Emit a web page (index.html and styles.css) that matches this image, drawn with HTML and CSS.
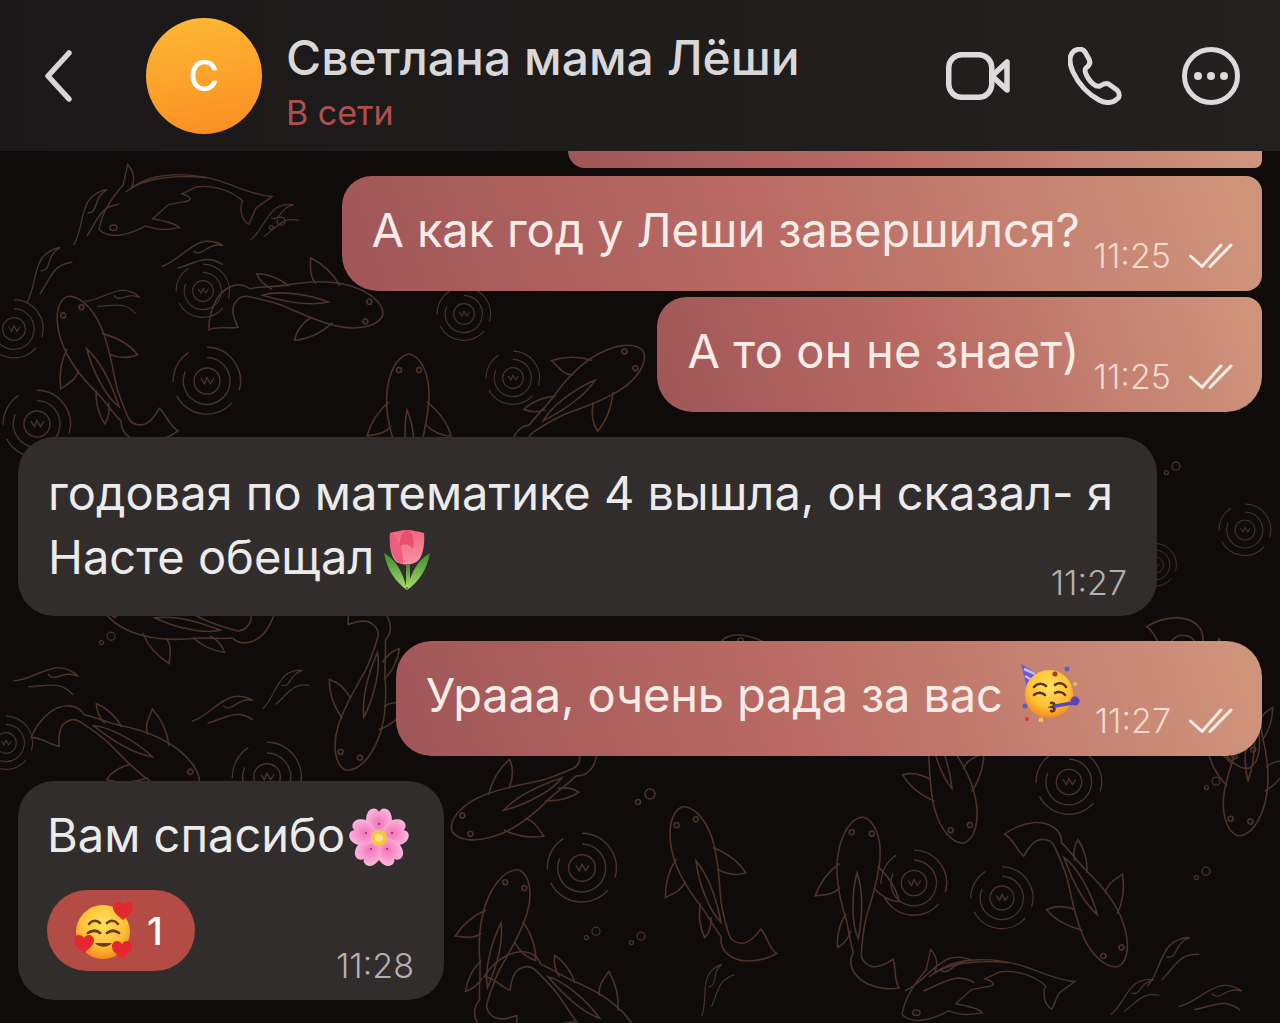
FILE: index.html
```html
<!DOCTYPE html>
<html lang="ru">
<head>
    <meta charset="UTF-8">
    <title>Светлана мама Лёши</title>
    <link rel="stylesheet" href="styles.css">
</head>
<body>

<!-- shared drawings -->
<svg class="defs" width="0" height="0">
    <defs>
        <symbol id="fish" viewBox="0 0 190 110" overflow="visible">
            <path d="M2 78C5 58 20 38 29 28L34 5C42 14 42 24 38 32C62 12 110 12 150 28C170 36 182 40 196 41L178 54L170 72C160 66 160 52 163 46C150 34 130 28 112 30L95 38C108 42 106 46 96 47L80 50L62 66C74 68 88 72 92 76C80 78 70 80 54 74C36 84 14 90 2 78Z"/>
            <path d="M32 36C50 20 88 16 122 20"/>
            <ellipse cx="18" cy="76" rx="4" ry="3"/>
        </symbol>
        <symbol id="koi" viewBox="0 0 100 170" overflow="visible">
            <path d="M42 2C30 4 22 20 20 40C18 60 24 84 32 104C36 116 38 128 42 138"/>
            <path d="M42 2C54 4 62 22 62 42C62 64 56 84 52 104C50 118 50 128 50 138"/>
            <path d="M42 138C36 150 44 162 58 168C70 172 82 172 90 170C84 162 86 150 82 142C74 148 66 152 60 150C54 148 50 144 50 138"/>
            <path d="M22 50C12 58 4 70 0 84C10 82 18 82 24 74"/>
            <path d="M60 50C70 58 80 68 84 84C74 84 66 80 58 72"/>
            <path d="M32 100C26 110 24 124 26 134C32 130 36 124 38 116"/>
            <path d="M40 58C36 80 38 110 46 124C48 104 48 76 40 58Z"/>
            <circle cx="32" cy="18" r="2.500"/>
            <circle cx="52" cy="18" r="2.500"/>
        </symbol>
        <symbol id="ripple" viewBox="0 0 90 90" overflow="visible">
            <path d="M45 18A27 27 0 1 1 20 34"/>
            <path d="M45 6A39 39 0 0 1 82 56"/>
            <path d="M74 70A39 39 0 0 1 10 62"/>
            <path d="M6 46A39 39 0 0 1 24 12"/>
            <circle cx="45" cy="45" r="15"/>
            <path d="M38 42L42 48L45 41L49 48L53 42"/>
        </symbol>
        <symbol id="swirl" viewBox="0 0 80 40" overflow="visible">
            <path d="M2 36C20 30 30 14 48 8C56 6 66 8 72 12C62 10 56 14 50 18C44 22 40 20 38 18"/>
            <path d="M20 38C34 34 44 28 54 28C60 28 66 30 72 34"/>
        </symbol>
        <symbol id="dots" viewBox="0 0 30 30" overflow="visible">
            <circle cx="8" cy="22" r="2.500"/>
            <circle cx="20" cy="14" r="5"/>
        </symbol>

        <radialGradient id="faceGrad" cx="50%" cy="35%" r="65%">
            <stop offset="0" stop-color="#ffe25a"/>
            <stop offset="0.65" stop-color="#fdbf35"/>
            <stop offset="1" stop-color="#f58a1f"/>
        </radialGradient>
        <linearGradient id="tulipGrad" x1="0" y1="0" x2="0" y2="1">
            <stop offset="0" stop-color="#f2667f"/>
            <stop offset="1" stop-color="#f894a4"/>
        </linearGradient>
        <linearGradient id="leafGrad" x1="0" y1="0" x2="0" y2="1">
            <stop offset="0" stop-color="#3d8a2c"/>
            <stop offset="1" stop-color="#a9dd6c"/>
        </linearGradient>
        <radialGradient id="petalGrad" cx="50%" cy="50%" r="55%">
            <stop offset="0" stop-color="#f472b8"/>
            <stop offset="1" stop-color="#fab6de"/>
        </radialGradient>
        <symbol id="heart" viewBox="0 0 20 18">
            <path d="M10 18C4 13 0 10 0 5.500C0 2 2.500 0 5 0C7 0 9 1 10 3C11 1 13 0 15 0C17.500 0 20 2 20 5.500C20 10 16 13 10 18Z" fill="#e5282f"/>
        </symbol>
        <symbol id="checks" viewBox="0 0 44 26">
            <path d="M1.500 13L13 23.500L32 2M21 23.500L42 2" fill="none" stroke="currentColor" stroke-width="3" stroke-linecap="round" stroke-linejoin="round"/>
        </symbol>
    </defs>
</svg>

<!-- wallpaper -->
<svg class="wallpaper" width="1280" height="1023" viewBox="0 0 1280 1023">
    <g class="line">
        <use href="#fish" width="170" height="98" transform="translate(97 160)"/>
        <use href="#fish" width="170" height="98" transform="translate(900 945)"/>

        <use href="#koi" width="100" height="170" transform="translate(65 295) rotate(-24) translate(-42 0)"/>
        <use href="#koi" width="100" height="170" transform="translate(385 315) rotate(101) translate(-42 0)"/>
        <use href="#koi" width="100" height="170" transform="translate(409 352) translate(-42 0)"/>
        <use href="#koi" width="100" height="170" transform="translate(645 350) rotate(57) translate(-42 0)"/>
        <use href="#koi" width="100" height="170" transform="translate(100 600) rotate(-74) translate(-42 0)"/>
        <use href="#koi" width="100" height="170" transform="translate(200 790) rotate(123) translate(-42 0)"/>
        <use href="#koi" width="100" height="170" transform="translate(345 772) rotate(-163) translate(-42 0)"/>
        <use href="#koi" width="100" height="170" transform="translate(681 805) rotate(-17) translate(-42 0)"/>
        <use href="#koi" width="100" height="170" transform="translate(863 815) rotate(4) translate(-42 0)"/>
        <use href="#koi" width="100" height="170" transform="translate(1120 968) rotate(155) translate(-42 0)"/>
        <use href="#koi" width="100" height="170" transform="translate(965 845) rotate(165) translate(-42 0)"/>
        <use href="#koi" width="100" height="170" transform="translate(520 868) rotate(17) translate(-42 0)"/>
        <use href="#koi" width="100" height="170" transform="translate(450 832) rotate(-114) translate(-42 0)"/>
        <use href="#koi" width="100" height="170" transform="translate(1238 838) rotate(-172) translate(-42 0)"/>
        <use href="#koi" width="100" height="170" transform="translate(640 1060) rotate(134) translate(-42 0)"/>
        <use href="#koi" width="100" height="170" transform="translate(1300 470) rotate(-110) translate(-42 0)"/>
        <use href="#koi" width="100" height="170" transform="translate(1250 770) rotate(160) translate(-42 0)"/>
        <use href="#koi" width="100" height="170" transform="translate(720 640) rotate(-60) translate(-42 0)"/>

        <use href="#ripple" width="68" height="68" transform="translate(-20 295)"/>
        <use href="#ripple" width="78" height="78" transform="translate(168 342)"/>
        <use href="#ripple" width="78" height="78" transform="translate(-2 385)"/>
        <use href="#ripple" width="62" height="62" transform="translate(172 260)"/>
        <use href="#ripple" width="62" height="62" transform="translate(433 283)"/>
        <use href="#ripple" width="62" height="62" transform="translate(482 347)"/>
        <use href="#ripple" width="62" height="62" transform="translate(-25 712)"/>
        <use href="#ripple" width="80" height="80" transform="translate(227 737)"/>
        <use href="#ripple" width="80" height="80" transform="translate(542 828)"/>
        <use href="#ripple" width="76" height="76" transform="translate(876 845)"/>
        <use href="#ripple" width="72" height="72" transform="translate(966 862)"/>
        <use href="#ripple" width="76" height="76" transform="translate(1031 744)"/>
        <use href="#ripple" width="60" height="60" transform="translate(1215 500)"/>
        <use href="#ripple" width="50" height="50" transform="translate(1130 540)"/>

        <use href="#swirl" width="70" height="35" transform="translate(52 222) rotate(-40)"/>
        <use href="#swirl" width="70" height="35" transform="translate(160 235)"/>
        <use href="#swirl" width="60" height="30" transform="translate(240 215) rotate(-20)"/>
        <use href="#swirl" width="70" height="35" transform="translate(5 280) rotate(-40)"/>
        <use href="#swirl" width="60" height="30" transform="translate(90 275) rotate(15)"/>
        <use href="#swirl" width="70" height="35" transform="translate(20 650) rotate(15)"/>
        <use href="#swirl" width="70" height="35" transform="translate(190 690)"/>
        <use href="#swirl" width="60" height="30" transform="translate(250 685) rotate(-25)"/>
        <use href="#swirl" width="80" height="40" transform="translate(900 955) rotate(-5)"/>
        <use href="#swirl" width="70" height="35" transform="translate(1130 960) rotate(-30)"/>
        <use href="#swirl" width="70" height="35" transform="translate(1180 975) rotate(5)"/>
        <use href="#swirl" width="60" height="30" transform="translate(1100 990) rotate(-20)"/>
        <use href="#swirl" width="60" height="30" transform="translate(680 1000) rotate(-50)"/>

        <use href="#dots" width="30" height="30" transform="translate(630 780)"/>
        <use href="#dots" width="24" height="24" transform="translate(580 920)"/>
        <use href="#dots" width="24" height="24" transform="translate(625 925)"/>
        <use href="#dots" width="24" height="24" transform="translate(1190 860)"/>
        <use href="#dots" width="24" height="24" transform="translate(1200 770)"/>
        <use href="#dots" width="24" height="24" transform="translate(1160 455)"/>
        <use href="#dots" width="24" height="24" transform="translate(265 210)"/>
        <use href="#dots" width="24" height="24" transform="translate(95 625)"/>
    </g>
</svg>

<div class="screen">
    <header class="topbar">
        <svg class="back" width="27" height="52" viewBox="0 0 27 52">
            <path d="M24 3L3 26L24 49" fill="none" stroke="#d7d5d5" stroke-width="5.500" stroke-linecap="round" stroke-linejoin="round"/>
        </svg>
        <div class="avatar">С</div>
        <div class="who">
            <div class="name">Светлана мама Лёши</div>
            <div class="status">В сети</div>
        </div>
        <div class="actions">
            <svg class="video" width="64" height="48" viewBox="0 0 64 48" fill="none" stroke="#dcdada" stroke-width="5.500" stroke-linejoin="round">
                <rect x="2.750" y="2.750" width="43" height="42.500" rx="13"/>
                <path d="M46 24L61 10V38Z"/>
            </svg>
            <svg width="54" height="58" viewBox="0 0 54 58" fill="none" stroke="#dcdada" stroke-width="5" stroke-linejoin="round">
                <path d="M6 4C11 1 15 2 17 5L21 12C23 16 21 19 18 21C16 23 17 26 20 31C24 37 28 40 32 39C35 37 39 35 42 38L49 43C52 46 52 50 49 52C45 56 38 57 31 53C20 47 11 38 5 25C1 16 0 9 6 4Z"/>
            </svg>
            <svg width="58" height="58" viewBox="0 0 58 58">
                <circle cx="29" cy="29" r="26.500" fill="none" stroke="#dcdada" stroke-width="5"/>
                <circle cx="16" cy="29" r="4" fill="#dcdada"/>
                <circle cx="29" cy="29" r="4" fill="#dcdada"/>
                <circle cx="42" cy="29" r="4" fill="#dcdada"/>
            </svg>
        </div>
    </header>

    <main class="chat">
        <div class="msg out cut"></div>

        <div class="msg out single first">
            <span class="text">А как год у Леши завершился?</span>
            <span class="meta">11:25<svg class="tick"><use href="#checks"/></svg></span>
        </div>

        <div class="msg out single last">
            <span class="text">А то он не знает)</span>
            <span class="meta">11:25<svg class="tick"><use href="#checks"/></svg></span>
        </div>

        <div class="msg in stacked">
            <div class="text">годовая по математике 4 вышла, он сказал- я<br>Насте обещал<svg class="emoji tulip" viewBox="0 0 48 62">
                <path d="M23 36H27V58H23Z" fill="url(#leafGrad)"/>
                <path d="M1 24C12 30 20 42 24 61C12 53 4 40 1 24Z" fill="url(#leafGrad)"/>
                <path d="M47 24C36 30 28 42 24 61C36 53 44 40 47 24Z" fill="url(#leafGrad)"/>
                <path d="M7 4C12 3 18 1 24 1C30 1 36 3 41 4C42 16 40 32 31 34C27 36 20 36 16 34C8 32 6 16 7 4Z" fill="url(#tulipGrad)"/>
                <path d="M7 4C14 6 20 14 20 35C10 34 6 18 7 4Z" fill="#ef5f7c"/>
                <path d="M24 1C30 4 32 10 30 20C26 14 20 14 17 18C16 10 18 4 24 1Z" fill="#e84f70"/>
            </svg></div>
            <span class="meta">11:27</span>
        </div>

        <div class="msg out single party">
            <span class="text">Урааа, очень рада за вас</span>
            <svg class="emoji partyface" viewBox="0 0 62 62">
                <path d="M2 4L22 16L8 28Z" fill="#6a5ad0"/>
                <path d="M5 9L16 14M6 16L13 20" stroke="#c3b8f2" stroke-width="2.500"/>
                <circle cx="30" cy="34" r="24" fill="url(#faceGrad)"/>
                <path d="M15 27C18 23 24 23 27 26M36 25C39 22 45 23 47 27M15 35C18 32 23 32 26 35M36 33C39 31 44 32 46 35" fill="none" stroke="#5a3212" stroke-width="2.500" stroke-linecap="round"/>
                <path d="M32 43C36 42 36 46 33 47C37 48 36 52 32 51" fill="none" stroke="#5a3212" stroke-width="2.500" stroke-linecap="round"/>
                <path d="M36 46L54 43" stroke="#5a46b8" stroke-width="3.500" stroke-linecap="round"/>
                <circle cx="56" cy="41" r="4.500" fill="#5a46b8"/>
                <circle cx="48" cy="9" r="2.500" fill="#5a62c0"/>
                <circle cx="36" cy="14" r="2.500" fill="#b2332d"/>
                <circle cx="6" cy="46" r="2.500" fill="#5a62c0"/>
                <circle cx="8" cy="59" r="2" fill="#d93a3a"/>
                <circle cx="56" cy="24" r="2" fill="#f0c24a"/>
                <circle cx="22" cy="60" r="2.500" fill="#f0c24a"/>
            </svg>
            <span class="meta">11:27<svg class="tick"><use href="#checks"/></svg></span>
        </div>

        <div class="msg in reacted">
            <div class="text">Вам спасибо<svg class="emoji blossom" viewBox="0 0 62 62">
                <g fill="url(#petalGrad)">
                    <path d="M31 31C20 24 15 14 20 5C24 0 29 1 31 5C33 1 38 0 42 5C47 14 42 24 31 31Z"/>
                    <path d="M31 31C20 24 15 14 20 5C24 0 29 1 31 5C33 1 38 0 42 5C47 14 42 24 31 31Z" transform="rotate(72 31 31)"/>
                    <path d="M31 31C20 24 15 14 20 5C24 0 29 1 31 5C33 1 38 0 42 5C47 14 42 24 31 31Z" transform="rotate(144 31 31)"/>
                    <path d="M31 31C20 24 15 14 20 5C24 0 29 1 31 5C33 1 38 0 42 5C47 14 42 24 31 31Z" transform="rotate(216 31 31)"/>
                    <path d="M31 31C20 24 15 14 20 5C24 0 29 1 31 5C33 1 38 0 42 5C47 14 42 24 31 31Z" transform="rotate(288 31 31)"/>
                </g>
                <circle cx="31" cy="31" r="8" fill="#f0c64a"/>
                <circle cx="31" cy="31" r="4" fill="#f8e27a"/>
                <g fill="#8a2a5c">
                    <circle cx="31" cy="17" r="1"/>
                    <circle cx="44" cy="26" r="1"/>
                    <circle cx="39" cy="42" r="1"/>
                    <circle cx="23" cy="42" r="1"/>
                    <circle cx="18" cy="26" r="1"/>
                </g>
            </svg></div>
            <div class="foot">
                <div class="reaction">
                    <svg class="emoji hearts" viewBox="0 0 60 58">
                        <circle cx="29" cy="30" r="27" fill="url(#faceGrad)"/>
                        <path d="M15 22C18 18 23 18 26 21M33 21C36 18 41 18 44 22" fill="none" stroke="#6b3a12" stroke-width="2.500" stroke-linecap="round"/>
                        <path d="M14 31C18 28 23 28 26 31M33 31C37 28 41 28 45 31" fill="none" stroke="#6b3a12" stroke-width="2.800" stroke-linecap="round"/>
                        <path d="M21 41C25 46 34 46 38 41Z" fill="#6b3a12"/>
                        <use href="#heart" x="39" y="0" width="20" height="18"/>
                        <use href="#heart" x="0" y="33" width="20" height="18"/>
                        <use href="#heart" x="38" y="39" width="20" height="18"/>
                    </svg>
                    <span class="count">1</span>
                </div>
                <span class="meta">11:28</span>
            </div>
        </div>
    </main>
</div>

</body>
</html>
```

FILE: styles.css
```css
html, body {
    margin: 0;
    height: 100%;
}

body {
    background: #0e0b0a;
    font-family: "Inter", "Noto Sans", sans-serif;
    color: #ecebeb;
    overflow: hidden;
}

.defs {
    position: absolute;
}

.wallpaper {
    position: absolute;
    left: 0;
    top: 0;
}

.line {
    fill: none;
    stroke: #4c332c;
    stroke-width: 1.600;
}

.screen {
    position: relative;
    display: flex;
    flex-direction: column;
    height: 1023px;
}

.topbar {
    height: 151px;
    box-sizing: border-box;
    display: flex;
    align-items: center;
    padding: 0 40px 0 45px;
    background: linear-gradient(90deg, #1a1818, #242020);
}

.avatar {
    width: 116px;
    height: 116px;
    margin-left: 74px;
    border-radius: 50%;
    background: linear-gradient(170deg, #fdb935, #fb8d22);
    color: #fff;
    font-size: 42px;
    font-weight: 500;
    display: flex;
    align-items: center;
    justify-content: center;
}

.who {
    margin-left: 24px;
    padding-top: 12px;
}

.name {
    font-size: 48px;
    font-weight: 500;
    line-height: 54px;
    color: #d9d7d7;
}

.status {
    font-size: 34px;
    line-height: 40px;
    margin-top: 8px;
    color: #b04f4e;
}

.actions {
    margin-left: auto;
    display: flex;
    align-items: center;
    gap: 60px;
}

.video {
    margin-right: -2px;
}

.chat {
    display: flex;
    flex-direction: column;
    align-items: flex-start;
    padding: 0 18px;
}

.msg {
    box-sizing: border-box;
    font-size: 47px;
    line-height: 64px;
}

.out {
    align-self: flex-end;
    background: linear-gradient(72deg, #a05658, #b96a63 45%, #d0967d);
    color: #f7ece8;
}

.in {
    background: #322d2d;
}

.cut {
    width: 694px;
    height: 17px;
    border-radius: 0 0 14px 32px;
}

.single {
    display: flex;
    align-items: center;
    height: 115px;
    margin-top: 8px;
    padding: 0 29px 7px 30px;
    border-radius: 36px;
}

.first {
    border-radius: 30px 16px 16px 36px;
}

.first .text {
    letter-spacing: -.12px;
}

.last {
    margin-top: 6px;
    border-radius: 30px 16px 36px 36px;
}

.last .text {
    letter-spacing: .15px;
}

.party {
    margin-top: 25px;
}

.party .text {
    letter-spacing: -.15px;
}

.meta {
    font-size: 34px;
    font-weight: 300;
    line-height: 40px;
    color: #b3b0b0;
    white-space: nowrap;
}

.out .meta {
    display: flex;
    align-items: center;
    gap: 18px;
    margin: 52px 0 0 14px;
    color: #f4d9cf;
}

.tick {
    width: 44px;
    height: 26px;
    color: #f8ebe6;
}

.stacked {
    display: grid;
    width: 1139px;
    height: 179px;
    margin-top: 25px;
    padding: 24px 30px 13px;
    border-radius: 36px;
}

.stacked > * {
    grid-area: 1 / 1;
}

.stacked .meta {
    align-self: end;
    justify-self: end;
}

.emoji {
    vertical-align: middle;
}

.tulip {
    width: 48px;
    height: 62px;
    margin: -12px 0 -10px 9px;
}

.partyface {
    width: 62px;
    height: 62px;
    margin: 0 0 8px 16px;
}

.blossom {
    width: 62px;
    height: 62px;
    margin: -12px 0 -10px 3px;
}

.reacted {
    width: 426px;
    height: 219px;
    margin-top: 25px;
    padding: 22px 30px 14px 29px;
    border-radius: 36px;
}

.foot {
    display: flex;
    align-items: flex-end;
    justify-content: space-between;
}

.foot .meta {
    margin-bottom: -15px;
}

.reaction {
    display: flex;
    align-items: center;
    width: 148px;
    height: 81px;
    margin-top: 23px;
    padding-left: 27px;
    box-sizing: border-box;
    border-radius: 41px;
    background: #b44c46;
    color: #fff;
}

.hearts {
    width: 60px;
    height: 58px;
}

.count {
    margin-left: 13px;
    font-size: 38px;
    font-weight: 500;
}
```
